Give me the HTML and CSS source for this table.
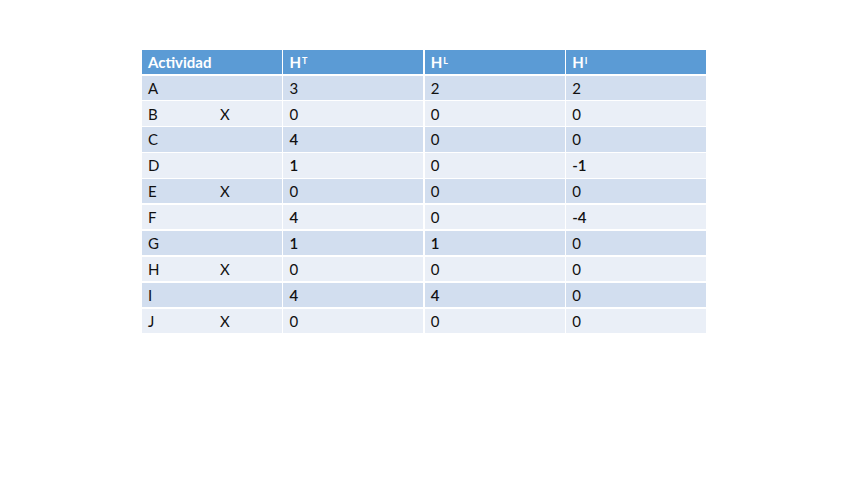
FILE: index.html
```html
<!DOCTYPE html>
<html lang="es">
<head>
<meta charset="utf-8">
<title>Holguras</title>
<link rel="stylesheet" href="styles.css">
</head>
<body>
<div class="slide">
  <div class="grid">
    <div class="cell head">Actividad</div>
    <div class="cell head">H<sup>T</sup></div>
    <div class="cell head">H<sup>L</sup></div>
    <div class="cell head">H<sup>I</sup></div>

    <div class="cell odd"><span class="act">A</span></div>
    <div class="cell odd">3</div>
    <div class="cell odd">2</div>
    <div class="cell odd">2</div>

    <div class="cell even"><span class="act">B</span>X</div>
    <div class="cell even">0</div>
    <div class="cell even">0</div>
    <div class="cell even">0</div>

    <div class="cell odd"><span class="act">C</span></div>
    <div class="cell odd heavy">4</div>
    <div class="cell odd">0</div>
    <div class="cell odd">0</div>

    <div class="cell even"><span class="act">D</span></div>
    <div class="cell even heavy">1</div>
    <div class="cell even">0</div>
    <div class="cell even heavy">-1</div>

    <div class="cell odd"><span class="act">E</span>X</div>
    <div class="cell odd">0</div>
    <div class="cell odd">0</div>
    <div class="cell odd">0</div>

    <div class="cell even"><span class="act">F</span></div>
    <div class="cell even heavy">4</div>
    <div class="cell even">0</div>
    <div class="cell even heavy">-4</div>

    <div class="cell odd"><span class="act">G</span></div>
    <div class="cell odd heavy">1</div>
    <div class="cell odd heavy">1</div>
    <div class="cell odd">0</div>

    <div class="cell even"><span class="act">H</span>X</div>
    <div class="cell even">0</div>
    <div class="cell even">0</div>
    <div class="cell even">0</div>

    <div class="cell odd"><span class="act">I</span></div>
    <div class="cell odd heavy">4</div>
    <div class="cell odd heavy">4</div>
    <div class="cell odd">0</div>

    <div class="cell even"><span class="act">J</span>X</div>
    <div class="cell even">0</div>
    <div class="cell even">0</div>
    <div class="cell even">0</div>
  </div>
</div>
</body>
</html>
```
FILE: styles.css
```css
html, body {
  margin: 0;
  padding: 0;
  background: #ffffff;
}
.slide {
  width: 848px;
  height: 477px;
  padding: 50px 0 0 142px;
  box-sizing: border-box;
  font-family: Lato, "Open Sans", "Liberation Sans", sans-serif;
  font-size: 15px;
  color: #111111;
}
.grid {
  display: grid;
  width: 564px;
  grid-template-columns: repeat(4, 1fr);
  grid-template-rows: 24px repeat(10, 24.4px);
  column-gap: 1.5px;
  row-gap: 1.5px;
}
.cell {
  display: flex;
  align-items: center;
  padding-left: 6px;
  white-space: nowrap;
}
.head {
  background: #5b9bd5;
  color: #ffffff;
  font-weight: 700;
}
.head sup {
  font-size: 9px;
  position: relative;
  top: -1px;
  vertical-align: super;
  line-height: 0;
  margin-left: 1px;
}
.odd {
  background: #d2deef;
}
.even {
  background: #eaeff7;
}
.heavy {
  font-weight: 600;
}
.act {
  display: inline-block;
  width: 72px;
}
```
